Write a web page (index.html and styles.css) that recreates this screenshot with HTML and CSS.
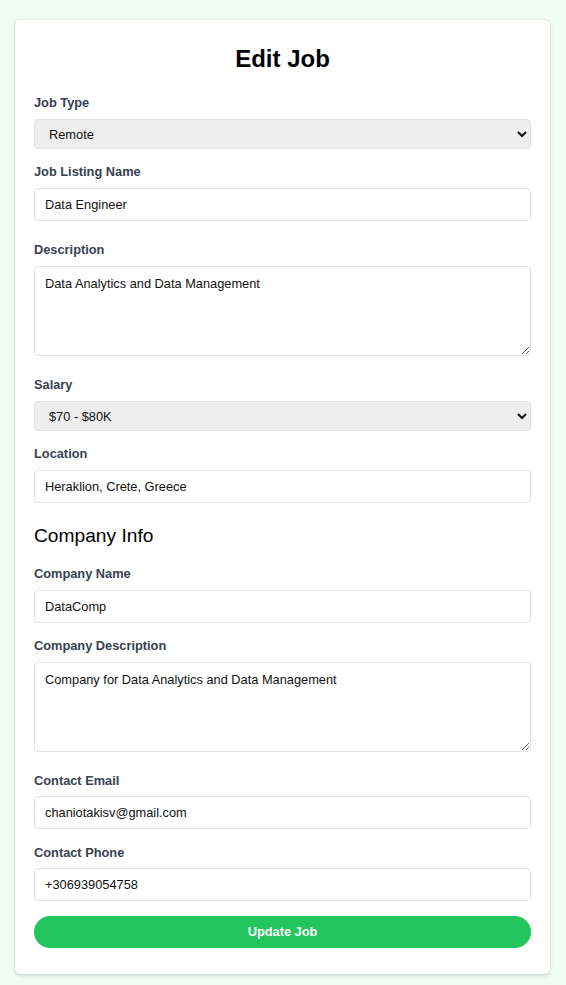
FILE: index.html
```html
<!DOCTYPE html>
<html lang="en">
<head>
<meta charset="utf-8">
<title>Edit Job</title>
<link rel="stylesheet" href="styles.css">
</head>
<body>
<div class="card">
  <form class="form">
    <h2 class="title">Edit Job</h2>

    <div class="field">
      <label class="label" for="type">Job Type</label>
      <select id="type" class="select">
        <option>Remote</option>
      </select>
    </div>

    <div class="field field-wide">
      <label class="label" for="name">Job Listing Name</label>
      <input id="name" class="input" type="text" value="Data Engineer">
    </div>

    <div class="field field-after-area">
      <label class="label" for="desc">Description</label>
      <textarea id="desc" class="textarea">Data Analytics and Data Management</textarea>
    </div>

    <div class="field">
      <label class="label" for="salary">Salary</label>
      <select id="salary" class="select">
        <option>$70 - $80K</option>
      </select>
    </div>

    <div class="field field-last">
      <label class="label" for="loc">Location</label>
      <input id="loc" class="input" type="text" value="Heraklion, Crete, Greece">
    </div>

    <h3 class="subtitle">Company Info</h3>

    <div class="field">
      <label class="label" for="cname">Company Name</label>
      <input id="cname" class="input" type="text" value="DataComp">
    </div>

    <div class="field field-after-area">
      <label class="label" for="cdesc">Company Description</label>
      <textarea id="cdesc" class="textarea">Company for Data Analytics and Data Management</textarea>
    </div>

    <div class="field">
      <label class="label" for="email">Contact Email</label>
      <input id="email" class="input" type="email" value="chaniotakisv@gmail.com">
    </div>

    <div class="field">
      <label class="label" for="phone">Contact Phone</label>
      <input id="phone" class="input" type="tel" value="+306939054758">
    </div>

    <button class="button" type="button">Update Job</button>
  </form>
</div>
</body>
</html>
```

FILE: styles.css
```css
html, body {
  margin: 0;
  padding: 0;
  background: #f0fdf4;
}

body {
  font-family: "Liberation Sans", Arial, sans-serif;
  padding: 20px 16px 11px 15px;
}

.card {
  background: #ffffff;
  border-radius: 5px;
  box-shadow: 0 0 0 1px rgba(0, 0, 0, 0.05), 0 2px 4px rgba(0, 0, 0, 0.12);
  padding: 23px 19px 26px 19px;
}

.form {
  display: flex;
  flex-direction: column;
  margin: 0;
}

.title {
  margin: 0 0 18px 0;
  text-align: center;
  font-size: 24px;
  line-height: 32px;
  font-weight: 700;
  color: #000;
}

.field {
  display: flex;
  flex-direction: column;
  margin-bottom: 13.4px;
}

.field-wide {
  margin-bottom: 19.5px;
}

.field-after-area {
  margin-bottom: 18.7px;
}

.field-last {
  margin-bottom: 19px;
}

.label {
  display: block;
  font-size: 12.8px;
  line-height: 20px;
  font-weight: 700;
  color: #374151;
  margin-bottom: 6px;
}

.input,
.select,
.textarea {
  box-sizing: border-box;
  width: 100%;
  font-family: "Liberation Sans", Arial, sans-serif;
  font-size: 12.8px;
  color: #111;
  border: 1px solid #e2e2e2;
  border-radius: 4px;
  margin: 0;
}

.input {
  height: 33px;
  margin-top: -0.5px;
  padding: 0 10px;
  background: #fff;
  outline: none;
}

.select {
  height: 30px;
  padding: 0 6px 0 10px;
  background-color: #eeeeee;
}

.textarea {
  display: block;
  height: 90px;
  padding: 9px 10px;
  background: #fff;
  resize: vertical;
  line-height: 15px;
}

.subtitle {
  margin: 0 0 14.4px 0;
  font-size: 19.2px;
  line-height: 28px;
  font-weight: 400;
  color: #000;
}

.button {
  margin-top: 1.2px;
  height: 32px;
  width: 100%;
  border: none;
  border-radius: 999px;
  background: #22c55e;
  color: #fff;
  font-family: "Liberation Sans", Arial, sans-serif;
  font-size: 12.8px;
  font-weight: 700;
  cursor: pointer;
}
```
